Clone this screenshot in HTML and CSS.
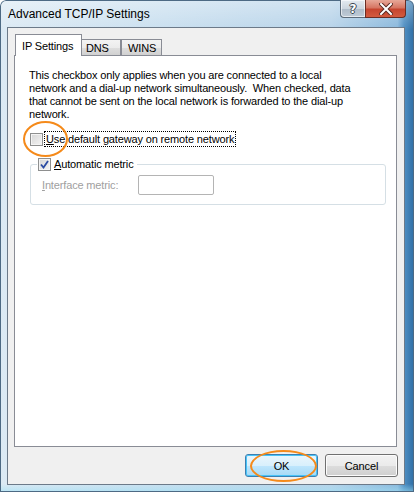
FILE: index.html
```html
<!DOCTYPE html>
<html lang="en">
<head>
    <meta charset="UTF-8">
    <title>Advanced TCP/IP Settings</title>
    <link rel="stylesheet" href="styles.css">
</head>
<body>

<div class="window">
    <div class="titlebar">
        <span class="title">Advanced TCP/IP Settings</span>
        <div class="caption-buttons">
            <div class="cap-btn help">?</div>
            <div class="cap-btn close">
                <svg width="14" height="12" viewBox="0 0 14 12">
                    <path d="M2 1 L12 11 M12 1 L2 11" stroke="#5a2a22" stroke-width="4" stroke-linecap="square"/>
                    <path d="M2 1 L12 11 M12 1 L2 11" stroke="#ffffff" stroke-width="2" stroke-linecap="square"/>
                </svg>
            </div>
        </div>
    </div>

    <div class="client">
        <div class="tabs">
            <div class="tab active">IP Settings</div>
            <div class="tab dns">DNS</div>
            <div class="tab">WINS</div>
        </div>

        <div class="panel">
            <p class="note">This checkbox only applies when you are connected to a local<br>network and a dial-up network simultaneously.&nbsp; When checked, data<br>that cannot be sent on the local network is forwarded to the dial-up<br>network.</p>

            <div class="check-row">
                <span class="box"></span>
                <span class="label focus"><u>U</u>se default gateway on remote network</span>
                <span class="ring ring-gateway"></span>
            </div>

            <fieldset class="group">
                <legend>
                    <span class="box checked">
                        <svg width="9" height="9" viewBox="0 0 9 9">
                            <path d="M1 4.5 L3.5 7.5 L8 1" fill="none" stroke="#2b4ba2" stroke-width="1.8"/>
                        </svg>
                    </span>
                    <span class="label"><u>A</u>utomatic metric</span>
                </legend>
                <div class="metric">
                    <span class="disabled"><u>I</u>nterface metric:</span>
                    <span class="input"></span>
                </div>
            </fieldset>
        </div>

        <div class="buttons">
            <div class="btn default">OK<span class="ring ring-ok"></span></div>
            <div class="btn">Cancel</div>
        </div>
    </div>
</div>

</body>
</html>
```

FILE: styles.css
```css
body {
    margin: 0;
    padding: 0;
    font-family: "Liberation Sans", Arial, sans-serif;
    font-size: 11px;
    letter-spacing: -0.15px;
    color: #000;
}
.window {
    width: 414px;
    height: 492px;
    box-sizing: border-box;
    padding: 0 9px 7px 7px;
    display: flex;
    flex-direction: column;
    background:
        linear-gradient(to bottom, rgba(255, 255, 255, 0.35), rgba(255, 255, 255, 0) 30px),
        linear-gradient(to top, rgba(160, 225, 245, 0.6), rgba(160, 225, 245, 0) 8px),
        linear-gradient(to right, #dceaf4 0, #c9dfef 40%, #b7d3e9 80%, #8ab8dc 96%, #4f8fc3 97.6%, #2f6ea4 100%);
    border-radius: 6px 6px 0 0;
    box-shadow: inset 0 0 0 1px #4d6a84;
}
.titlebar {
    height: 27px;
    display: flex;
    justify-content: space-between;
    align-items: flex-start;
}
.title {
    padding: 7px 0 0 1px;
    font-size: 12px;
    letter-spacing: 0;
    color: #000;
}
.caption-buttons {
    display: flex;
    margin-right: -1px;
}
.cap-btn {
    height: 18px;
    box-sizing: border-box;
    display: flex;
    align-items: center;
    justify-content: center;
    border: 1px solid #5c6b7a;
    border-top: none;
}
.help {
    width: 25px;
    border-radius: 0 0 0 4px;
    border-right: none;
    background: linear-gradient(to bottom, #e4eaf0 0, #cdd6df 50%, #aebbc8 51%, #bfcbd7 100%);
    box-shadow: inset 0 0 0 1px rgba(255, 255, 255, 0.6);
    color: #fff;
    font-family: "DejaVu Sans", sans-serif;
    font-weight: bold;
    font-size: 12px;
    letter-spacing: 0;
    text-shadow: 1px 0 0 #3d4650, -1px 0 0 #3d4650, 0 1px 0 #3d4650, 0 -1px 0 #3d4650;
}
.close {
    width: 41px;
    border-radius: 0 0 4px 0;
    border-color: #6a2d24;
    background: linear-gradient(to bottom, #e7a898 0, #d67663 45%, #c6452f 55%, #d35b3f 100%);
}
.client {
    flex: 1;
    background: #f0f0f0;
    border: 1px solid #6c7a89;
    padding: 6px 7px 6px 6px;
    display: flex;
    flex-direction: column;
}
.tabs {
    height: 22px;
    display: flex;
    align-items: flex-end;
    margin-left: 1px;
}
.tab {
    height: 17px;
    width: 41px;
    box-sizing: border-box;
    border: 1px solid #898c95;
    border-bottom: none;
    background: linear-gradient(to bottom, #f3f3f3 0, #ebebeb 50%, #dddddd 51%, #cfcfcf 100%);
    padding: 2px 0 0 4px;
}
.tab.active {
    position: relative;
    z-index: 2;
    width: 67px;
    height: 22px;
    background: #fff;
    padding: 5px 0 0 6px;
}
.tab.dns {
    margin-left: -2px;
    padding-left: 5px;
}
.tab.dns + .tab {
    padding-left: 6px;
}
.panel {
    height: 392px;
    box-sizing: border-box;
    margin-top: -1px;
    background: #fff;
    border: 1px solid #898c95;
    padding: 13px 0 0 14px;
}
.note {
    margin: 0 0 10px 0;
    line-height: 13px;
}
.check-row {
    position: relative;
    display: flex;
    align-items: center;
    height: 16px;
}
.box {
    width: 13px;
    height: 13px;
    box-sizing: border-box;
    border: 1px solid #8e8f8f;
    background: linear-gradient(135deg, #d6d6d6 0, #f4f4f4 100%);
    box-shadow: inset 0 0 0 1px #f4f4f4;
    display: flex;
    align-items: center;
    justify-content: center;
}
.check-row .box {
    margin-left: 1px;
}
.label {
    line-height: 14px;
}
.focus {
    margin-left: 1px;
    padding: 0 1px;
    border: 1px dotted #000;
}
.ring {
    position: absolute;
    border: 2px solid #f58a1a;
    border-radius: 50%;
    box-sizing: border-box;
}
.ring-gateway {
    left: -6px;
    top: -10px;
    width: 45px;
    height: 36px;
}
.group {
    width: 356px;
    box-sizing: border-box;
    margin: 10px 0 0 1px;
    padding: 4px 0 9px 0;
    border: 1px solid #d5dfe5;
    border-radius: 3px;
}
.group legend {
    display: flex;
    align-items: center;
    margin-left: 6px;
    padding: 0 3px 0 1px;
}
.group legend .label {
    margin-left: 3px;
}
.metric {
    display: flex;
    align-items: center;
    padding-left: 11px;
}
.disabled {
    width: 96px;
    line-height: 13px;
    color: #a0a0a0;
}
.input {
    width: 76px;
    height: 20px;
    box-sizing: border-box;
    border: 1px solid #b4b4b4;
    border-radius: 2px;
    background: #fff;
}
.buttons {
    display: flex;
    justify-content: flex-end;
    gap: 7px;
    margin: 7px -1px 0 0;
}
.btn {
    position: relative;
    width: 73px;
    height: 23px;
    box-sizing: border-box;
    border: 1px solid #707070;
    border-radius: 3px;
    background: linear-gradient(to bottom, #f2f2f2 0, #ebebeb 50%, #dddddd 51%, #cfcfcf 100%);
    box-shadow: inset 0 0 0 1px #fcfcfc;
    display: flex;
    align-items: center;
    justify-content: center;
}
.btn.default {
    border-color: #3c7fb1;
    background: linear-gradient(to bottom, #eaf6fd 0, #d9f0fc 50%, #bee6fd 51%, #a7d9f5 100%);
    box-shadow: inset 0 0 0 1px #48c4f8;
}
.ring-ok {
    left: 4px;
    top: -5px;
    width: 67px;
    height: 32px;
}
```
